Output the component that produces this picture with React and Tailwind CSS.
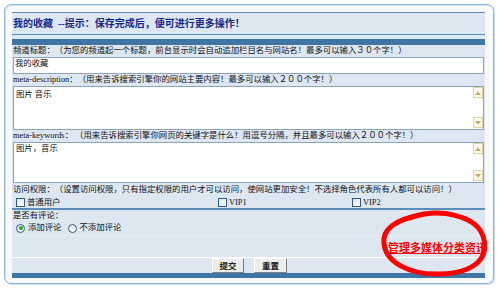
import React from "react";

const FONT = "font-['Liberation_Serif','Noto_Sans_CJK_SC',serif]";

function Arrow({ up }) {
  return (
    <div className="w-[10px] h-[11px] border border-[#e2d29e] bg-[#fbf8ee] flex items-center justify-center">
      <svg width="6" height="4" viewBox="0 0 6 4">
        {up ? (
          <polygon points="0,4 6,4 3,0.5" fill="#bfa765" />
        ) : (
          <polygon points="0,0 6,0 3,3.5" fill="#bfa765" />
        )}
      </svg>
    </div>
  );
}

function TextArea({ h, text, pt }) {
  return (
    <div className={`mx-[1px] ${h} bg-white border border-[#8aa3bf] flex`}>
      <div className={`flex-1 pl-[2px] ${pt} text-[8.4px] leading-[10px] text-[#111]`}>{text}</div>
      <div className="flex flex-col justify-between pb-[1px]">
        <Arrow up />
        <Arrow />
      </div>
    </div>
  );
}

function Check({ label }) {
  return (
    <div className="flex items-center gap-[2px]">
      <div className="w-[9px] h-[9px] border border-[#2a5a8a] bg-gradient-to-br from-[#e4e4e0] to-white" />
      <span>{label}</span>
    </div>
  );
}

function Radio({ label, checked }) {
  return (
    <div className="flex items-center gap-[3px]">
      <div className="w-[9px] h-[9px] rounded-full border border-[#2a5a8a] bg-gradient-to-br from-[#e4e4e0] to-white flex items-center justify-center">
        {checked && <div className="w-[4px] h-[4px] rounded-full bg-[#2ca52c]" />}
      </div>
      <span>{label}</span>
    </div>
  );
}

function Label({ children, h = "h-[12px]" }) {
  return (
    <div className={`${h} flex items-center pl-[1px] text-[8.4px] leading-[10px] text-[#111] whitespace-nowrap`}>
      {children}
    </div>
  );
}

export default function App() {
  return (
    <div className={`w-[500px] h-[294px] bg-white pt-[4px] pl-[4px] relative [text-spacing-trim:space-all] ${FONT}`}>
      <div className="w-[490px] h-[280px] rounded-[7px] border border-[#8ab6e6] bg-[#f8f9fa] shadow-[inset_1px_1px_0_#cfe1f5,1px_1px_0_#c8dcf2] pt-[7px] pl-[7px] pr-[8px] pb-[5px]">
        <div className="w-[473px] h-[266px] bg-[#dce7f2] flex flex-col">
          <div className="h-[23px] border-t border-b border-[#5b8cba] flex items-center pl-[1px] text-[10px] font-bold text-[#15278c] whitespace-nowrap">
            我的收藏&nbsp;&nbsp;--提示：保存完成后，便可进行更多操作！
          </div>
          <div className="h-[4px]" />
          <div className="h-[6px] bg-[#3e75a5]" />
          <Label>频道标题：（为您的频道起一个标题，前台显示时会自动追加栏目名与网站名！最多可以输入３０个字！）</Label>
          <div className="mx-[1px] h-[17px] bg-white border border-[#8aa3bf] pl-[1px] pt-[1px] text-[8.4px] leading-[10px] text-[#111]">
            我的收藏
          </div>
          <Label>meta-description：（用来告诉搜索引擎你的网站主要内容！最多可以输入２００个字！）</Label>
          <TextArea h="h-[44px]" text="图片 音乐" pt="pt-[3px]" />
          <Label>meta-keywords：&nbsp;（用来告诉搜索引擎你网页的关键字是什么！用逗号分隔，并且最多可以输入２００个字！）</Label>
          <TextArea h="h-[41px]" text="图片，音乐" pt="pt-[1px]" />
          <Label h="h-[14px]">访问权限：（设置访问权限，只有指定权限的用户才可以访问，使网站更加安全！不选择角色代表所有人都可以访问！）</Label>
          <div className="h-[11px] grid grid-cols-[202px_134px_1fr] pl-[4px] text-[8.4px] leading-[10px] text-[#111]">
            <Check label="普通用户" />
            <Check label="VIP1" />
            <Check label="VIP2" />
          </div>
          <div className="h-[2px] bg-[#5b8cba]" />
          <Label h="h-[11px]">是否有评论：</Label>
          <div className="h-[14px] flex items-center gap-[6px] pl-[4px] text-[8.4px] leading-[10px] text-[#111]">
            <Radio label="添加评论" checked />
            <Radio label="不添加评论" />
          </div>
          <div className="h-[22px] flex items-center justify-end border-t border-[#e6eef6]">
            <div className="w-[97px] overflow-hidden whitespace-nowrap">
              <a className="text-[11px] font-bold text-[#ff0000] underline leading-[14px] font-['Noto_Sans_CJK_SC',sans-serif]">
                管理多媒体分类资讯
              </a>
            </div>
          </div>
          <div className="h-[1px] bg-white" />
          <div className="h-[15px] flex justify-center gap-[10px] pl-[2px]">
            <button className="w-[32px] h-[15px] bg-[#ececec] border border-t-white border-l-white border-r-[#7c7c7c] border-b-[#7c7c7c] text-[8.5px] font-bold text-[#222] leading-[10px] flex items-center justify-center">
              提交
            </button>
            <button className="w-[33px] h-[15px] bg-[#ececec] border border-t-white border-l-white border-r-[#7c7c7c] border-b-[#7c7c7c] text-[8.5px] font-bold text-[#222] leading-[10px] flex items-center justify-center">
              重置
            </button>
          </div>
          <div className="h-[5px] bg-[#3e75a5]" />
        </div>
      </div>
      <svg className="absolute left-0 top-0 pointer-events-none" width="500" height="294" viewBox="0 0 500 294">
        <path
          d="M 410 218 C 440 207, 476 216, 483 236 C 490 257, 476 273, 440 274 C 409 275, 386 262, 384 244 C 382 229, 394 220, 424 214"
          fill="none"
          stroke="#ff0000"
          strokeWidth="5"
          strokeLinecap="round"
        />
      </svg>
    </div>
  );
}
